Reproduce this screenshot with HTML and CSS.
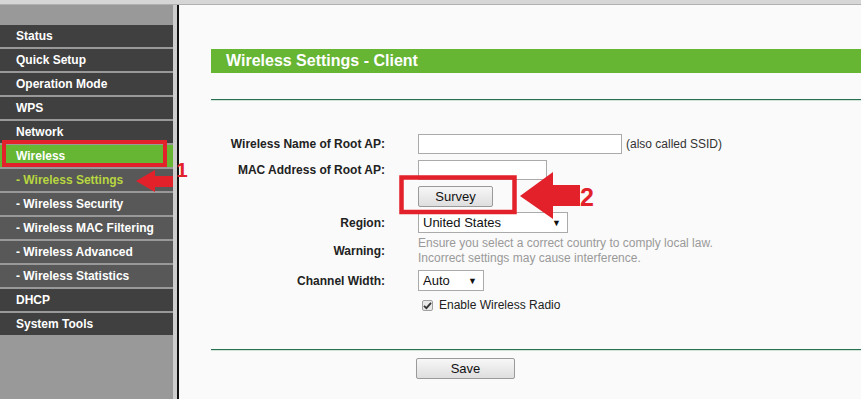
FILE: index.html
```html
<!DOCTYPE html>
<html lang="en">
<head>
<meta charset="UTF-8" />
<title>Wireless Settings - Client</title>
<link rel="stylesheet" href="styles.css">
</head>
<body>

<div class="topband"></div>

<div class="page">
  <div class="sidebar">
    <div class="menu">Status</div>
    <div class="menu">Quick Setup</div>
    <div class="menu">Operation Mode</div>
    <div class="menu">WPS</div>
    <div class="menu">Network</div>
    <div class="menu active">Wireless</div>
    <div class="menu sub current">- Wireless Settings</div>
    <div class="menu sub">- Wireless Security</div>
    <div class="menu sub">- Wireless MAC Filtering</div>
    <div class="menu sub">- Wireless Advanced</div>
    <div class="menu sub">- Wireless Statistics</div>
    <div class="menu">DHCP</div>
    <div class="menu">System Tools</div>
  </div>
  <div class="divider"></div>

  <div class="main">
    <div class="title">Wireless Settings - Client</div>
    <div class="rule"></div>

    <div class="form">
      <div class="row r-ssid">
        <div class="label">Wireless Name of Root AP:</div>
        <div class="field"><input type="text" class="input wide" /><span class="note">(also called SSID)</span></div>
      </div>
      <div class="row r-mac">
        <div class="label">MAC Address of Root AP:</div>
        <div class="field"><input type="text" class="input mac" /></div>
      </div>
      <div class="row r-survey">
        <div class="label"></div>
        <div class="field"><button class="button survey">Survey</button></div>
      </div>
      <div class="row r-region">
        <div class="label">Region:</div>
        <div class="field"><div class="select region"><span>United States</span><span class="caret">▼</span></div></div>
      </div>
      <div class="row r-warn">
        <div class="label">Warning:</div>
        <div class="field warning">Ensure you select a correct country to comply local law.<br />Incorrect settings may cause interference.</div>
      </div>
      <div class="row r-chan">
        <div class="label">Channel Width:</div>
        <div class="field"><div class="select chan"><span>Auto</span><span class="caret">▼</span></div></div>
      </div>
      <div class="row r-check">
        <div class="label"></div>
        <div class="field check">
          <span class="box">
            <svg width="9" height="9" viewBox="0 0 9 9"><path d="M1 4.8 L3.4 7.2 L8 1.8" fill="none" stroke="#333" stroke-width="1.8"/></svg>
          </span>
          Enable Wireless Radio
        </div>
      </div>
    </div>

    <div class="rule bottom"></div>
    <button class="button save">Save</button>
  </div>
</div>

<!-- red annotations drawn over the screenshot -->
<svg class="marks" width="861" height="399" viewBox="0 0 861 399">
  <rect x="4" y="142" width="161" height="23" fill="none" stroke="#e3212b" stroke-width="4"/>
  <polygon points="136,181 155,170 155,176 173,176 173,187 155,187 155,192" fill="#e3212b"/>
  <text x="176" y="177" class="num">1</text>
  <rect x="401.5" y="177.5" width="113" height="34.5" fill="none" stroke="#e3212b" stroke-width="4.5"/>
  <polygon points="520,196 553,172 553,185 580,185 580,206 553,206 553,219" fill="#e3212b"/>
  <text x="580" y="206" class="num big">2</text>
</svg>

</body>
</html>
```

FILE: styles.css
```css
html, body {
  margin: 0;
  height: 100%;
  overflow: hidden;
}
body {
  font-family: "Liberation Sans", Arial, sans-serif;
  background-color: #fafafa;
  position: relative;
}
.topband {
  height: 4px;
  background-color: #d6d6d6;
  border-bottom: 1px solid #b0b0b0;
}
.page {
  display: flex;
  height: calc(100% - 5px);
}
.sidebar {
  width: 173px;
  background-color: #999999;
  padding-top: 20px;
}
.menu {
  height: 22px;
  line-height: 22px;
  margin-bottom: 2px;
  padding-left: 16px;
  background-color: #404040;
  color: white;
  font-weight: bold;
  font-size: 12px;
}
.menu.sub {
  background-color: #585858;
}
.menu.active {
  background-color: #66b533;
}
.menu.current {
  color: #b7d640;
}
.divider {
  width: 4px;
  background-color: #cdcdcd;
  border-right: 2px solid #111;
}
.main {
  flex: 1;
  padding-left: 32px;
  background-color: #fafafa;
}
.title {
  margin-top: 44px;
  height: 24px;
  line-height: 23px;
  background-color: #66b533;
  color: white;
  font-weight: bold;
  font-size: 16px;
  padding-left: 15px;
}
.rule {
  height: 1px;
  background-color: #2b7050;
  box-shadow: 0 1px 0 #cfe3d8;
  margin-top: 26px;
}
.rule.bottom {
  margin-top: 36px;
}
.form {
  margin-top: 34px;
}
.row {
  display: flex;
  gap: 33px;
}
.r-ssid { height: 20px; margin-bottom: 6px; }
.r-mac { height: 20px; margin-bottom: 6px; }
.r-survey { height: 21px; margin-bottom: 5px; }
.r-region { height: 21px; margin-bottom: 3px; }
.r-warn { height: 30px; margin-bottom: 4px; }
.r-chan { height: 21px; margin-bottom: 6px; }
.r-check { height: 16px; }
.label {
  width: 174px;
  font-weight: bold;
  font-size: 12px;
  color: #222;
  display: flex;
  align-items: center;
  justify-content: flex-end;
}
.field {
  display: flex;
  align-items: center;
  font-size: 12px;
  color: #333;
}
.input {
  box-sizing: border-box;
  height: 20px;
  border: 1px solid #aaa;
  background: white;
  padding: 0 4px;
  margin: 0;
}
.input.wide {
  width: 204px;
}
.input.mac {
  width: 129px;
}
.note {
  margin-left: 4px;
}
.button {
  box-sizing: border-box;
  height: 21px;
  border: 1px solid #9a9a9a;
  border-radius: 2px;
  background: linear-gradient(#f7f7f7, #dedede);
  font-family: "Liberation Sans", Arial, sans-serif;
  font-size: 13px;
  color: #111;
  padding: 0;
  margin: 0;
}
.button.survey {
  width: 75px;
}
.button.save {
  display: block;
  width: 99px;
  margin: 8px 0 0 205px;
}
.select {
  box-sizing: border-box;
  height: 21px;
  border: 1px solid #aaa;
  background: white;
  font-size: 13px;
  color: #111;
  display: flex;
  align-items: center;
  justify-content: space-between;
  padding: 0 6px 0 4px;
}
.select.region {
  width: 150px;
}
.select.chan {
  width: 66px;
}
.caret {
  font-size: 9px;
}
.warning {
  display: block;
  line-height: 15px;
  color: #999;
}
.check {
  color: #222;
  font-size: 12px;
}
.box {
  box-sizing: border-box;
  width: 11px;
  height: 11px;
  margin: 0 6px 0 4px;
  border: 1px solid #a0a0a0;
  border-radius: 2px;
  background: #e8e8e8;
  display: flex;
  align-items: center;
  justify-content: center;
}
.marks {
  position: absolute;
  left: 0;
  top: 0;
  pointer-events: none;
}
.num {
  fill: #e3212b;
  font-family: "Liberation Sans", Arial, sans-serif;
  font-weight: bold;
  font-size: 21px;
}
.num.big {
  font-size: 25px;
}
```
